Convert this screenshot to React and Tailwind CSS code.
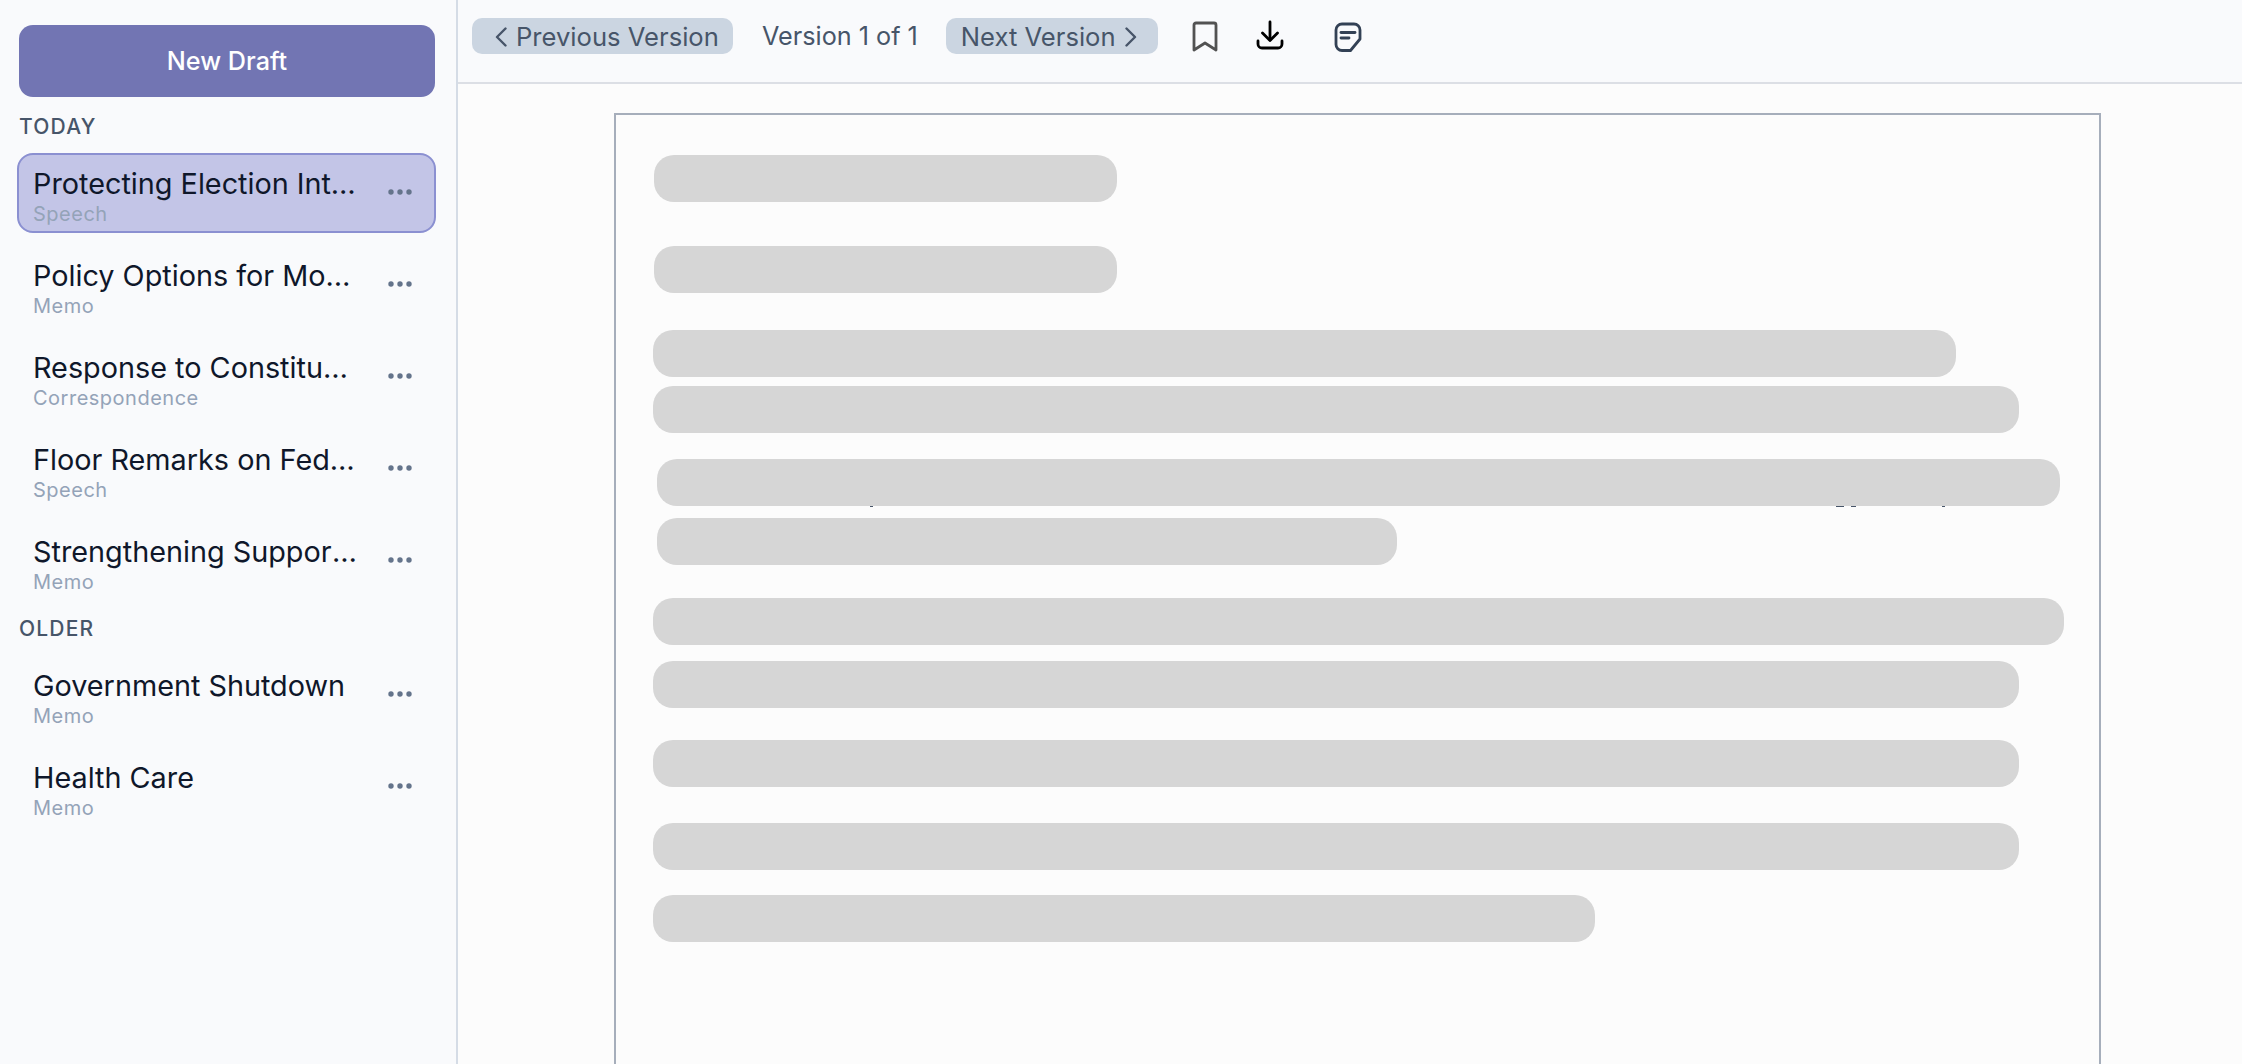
const today = [
  { title: 'Protecting Election Integrity', kind: 'Speech', active: true },
  { title: 'Policy Options for Modernizing Benefits', kind: 'Memo' },
  { title: 'Response to Constituent Inquiry', kind: 'Correspondence' },
  { title: 'Floor Remarks on Federal Funding', kind: 'Speech' },
  { title: 'Strengthening Support for Veterans', kind: 'Memo' },
]

const older = [
  { title: 'Government Shutdown', kind: 'Memo' },
  { title: 'Health Care', kind: 'Memo' },
]

function Dots() {
  return (
    <svg width="24" height="6" viewBox="0 0 24 6" className="absolute left-[369px] top-[34px] fill-[#64748b]">
      <circle cx="3" cy="3" r="2.7" />
      <circle cx="12" cy="3" r="2.7" />
      <circle cx="21" cy="3" r="2.7" />
    </svg>
  )
}

function DraftItem({ item }) {
  const tone = item.active
    ? 'border-[#8b90d1] bg-[#c3c5e7]'
    : 'border-transparent'
  return (
    <div className={`relative ml-[-2px] h-[80px] w-[419px] rounded-[16px] border-2 pl-[14px] pt-[11px] ${tone}`}>
      <div className="h-[36px] w-[328px] truncate text-[28.8px] leading-[36px] text-[#0f172a]">{item.title}</div>
      <div className="h-[24px] text-[20px] leading-[24px] tracking-[0.5px] text-[#94a3b8]">{item.kind}</div>
      <Dots />
    </div>
  )
}

function Sidebar() {
  return (
    <aside className="h-full w-[458px] shrink-0 border-r-2 border-[#d5dce6] bg-[#f9fafc] pl-[19px] pt-[25px]">
      <button className="h-[72px] w-[416px] rounded-[14px] bg-[#7275b3] pt-[1px] text-[25.2px] font-medium text-white">New Draft</button>
      <div className="mt-[18px] mb-[14px] h-[24px] text-[21px] font-medium leading-[24px] tracking-[1.2px] text-[#475569]">TODAY</div>
      <div className="flex flex-col gap-[12px]">
        {today.map((item) => <DraftItem key={item.title} item={item} />)}
      </div>
      <div className="mt-[16px] mb-[14px] h-[24px] text-[21px] font-medium leading-[24px] tracking-[1.2px] text-[#475569]">OLDER</div>
      <div className="flex flex-col gap-[12px]">
        {older.map((item) => <DraftItem key={item.title} item={item} />)}
      </div>
    </aside>
  )
}

function Toolbar() {
  return (
    <div className="flex h-[84px] shrink-0 items-start border-b-2 border-[#dcdfe5] bg-[#f9fafc] pl-[14px] pt-[18px] text-[25.6px] text-[#475569]">
      <button className="flex h-[36px] w-[261px] items-center gap-[9px] rounded-[10px] bg-[#cbd5e1] pl-[23px] pt-[2px] leading-none">
        <svg width="12" height="20" viewBox="0 0 12 20" fill="none" stroke="#475569" strokeWidth="2.4" strokeLinecap="round" strokeLinejoin="round">
          <path d="M10.5 1.5 2 10l8.5 8.5" />
        </svg>
        <span>Previous Version</span>
      </button>
      <span className="ml-[29px] flex h-[36px] items-center pt-[2px] text-[25.2px] leading-none">Version 1 of 1</span>
      <button className="ml-[28px] flex h-[36px] w-[212px] items-center gap-[9px] rounded-[10px] bg-[#cbd5e1] pl-[15px] pt-[2px] leading-none">
        <span>Next Version</span>
        <svg width="12" height="20" viewBox="0 0 12 20" fill="none" stroke="#475569" strokeWidth="2.4" strokeLinecap="round" strokeLinejoin="round">
          <path d="M1.5 1.5 10 10l-8.5 8.5" />
        </svg>
      </button>
      <svg width="28" height="32" viewBox="0 0 28 32" fill="none" stroke="#525252" strokeWidth="2.8" strokeLinejoin="round" className="ml-[33px] mt-[2px]">
        <path d="M3 5a2 2 0 0 1 2-2h18a2 2 0 0 1 2 2v25l-11-7-11 7z" />
      </svg>
      <svg width="28" height="30" viewBox="0 0 28 30" fill="none" stroke="#000" strokeWidth="2.8" strokeLinecap="round" strokeLinejoin="round" className="ml-[37px] mt-[2px]">
        <path d="M14 2v18" />
        <path d="M6.5 13 14 20.5 21.5 13" />
        <path d="M2 21v3a4 4 0 0 0 4 4h16a4 4 0 0 0 4-4v-3" />
      </svg>
      <svg width="28" height="31" viewBox="0 0 28 31" fill="none" stroke="#334155" strokeWidth="2.8" strokeLinecap="round" strokeLinejoin="round" className="ml-[50px] mt-[4px]">
        <path d="M8 2h12a6 6 0 0 1 6 6v9l-9.5 11.5H8a6 6 0 0 1-6-6V8a6 6 0 0 1 6-6z" />
        <path d="M7 10.5h14" />
        <path d="M7 16h8" />
      </svg>
    </div>
  )
}

const bars = [
  { w: 'w-[463px]', m: 'mt-0' },
  { w: 'w-[463px]', m: 'mt-[44px]' },
  { w: 'w-[1303px]', m: 'mt-[37px] ml-[-1px]' },
  { w: 'w-[1366px]', m: 'mt-[9px] ml-[-1px]' },
  { w: 'w-[1403px]', m: 'mt-[26px] ml-[3px]', specks: true },
  { w: 'w-[740px]', m: 'mt-[12px] ml-[3px]' },
  { w: 'w-[1411px]', m: 'mt-[33px] ml-[-1px]' },
  { w: 'w-[1366px]', m: 'mt-[16px] ml-[-1px]' },
  { w: 'w-[1366px]', m: 'mt-[32px] ml-[-1px]' },
  { w: 'w-[1366px]', m: 'mt-[36px] ml-[-1px]' },
  { w: 'w-[942px]', m: 'mt-[25px] ml-[-1px]' },
]

function Bar({ bar }) {
  return (
    <div className={`relative h-[47px] rounded-[20px] bg-[#d6d6d6] ${bar.w} ${bar.m}`}>
      {bar.specks && (
        <>
          <span className="absolute left-[213px] top-full h-[1px] w-[3px] bg-[#475569]" />
          <span className="absolute left-[1179px] top-full h-[1px] w-[8px] bg-[#475569]" />
          <span className="absolute left-[1194px] top-full h-[1px] w-[5px] bg-[#475569]" />
          <span className="absolute left-[1285px] top-full h-[1px] w-[3px] bg-[#475569]" />
        </>
      )}
    </div>
  )
}

export default function App() {
  return (
    <div className="flex h-screen w-full overflow-hidden bg-[#fcfcfc] font-['Inter',sans-serif]">
      <Sidebar />
      <div className="flex min-w-0 flex-1 flex-col overflow-hidden">
        <Toolbar />
        <div className="flex-1 overflow-hidden pl-[156px] pt-[29px]">
          <div className="h-[1200px] w-[1487px] border-2 border-[#a6aebb] pl-[38px] pt-[40px]">
            {bars.map((bar, i) => <Bar key={i} bar={bar} />)}
          </div>
        </div>
      </div>
    </div>
  )
}
